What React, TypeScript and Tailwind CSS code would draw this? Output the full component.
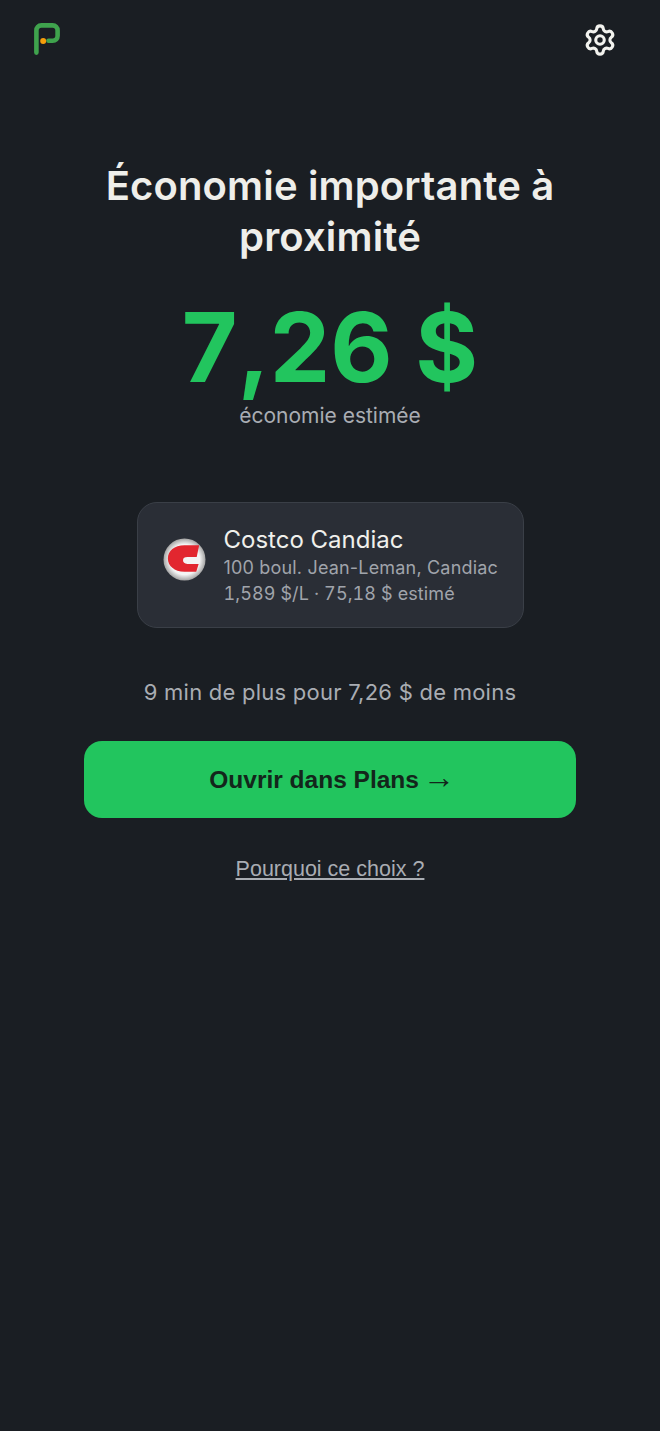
import { Settings } from 'lucide-react'

function Logo() {
  return (
    <svg width="26" height="32" viewBox="0 0 26 32" fill="none">
      <path d="M2.4 29.6V7.4C2.4 4.4 4.4 2.4 7.4 2.4H18.6C21.6 2.4 23.6 4.4 23.6 7.4V12.8C23.6 15.8 21.6 17.8 18.6 17.8H14.5" stroke="#3fa34d" strokeWidth="4.6" strokeLinecap="round" strokeLinejoin="round" />
      <circle cx="9.2" cy="18" r="3" fill="#f59e0b" />
    </svg>
  )
}

function StoreLogo() {
  return (
    <svg className="mb-[14px]" width="43" height="43" viewBox="0 0 44 44">
      <defs>
        <radialGradient id="disc">
          <stop offset="0.72" stopColor="#f4f4f4" />
          <stop offset="1" stopColor="#a3a3a3" />
        </radialGradient>
      </defs>
      <circle cx="22" cy="22" r="21.5" fill="url(#disc)" />
      <path d="M37 7.5H22C11.5 7.5 5 13.5 5 21C5 28.5 11.5 34.5 22 34.5H34L36.5 26.5H25C22 26.5 20.5 25 20.5 22.8C20.5 20.6 22 19.5 25 19.5H34.5Z" fill="#e2262f" />
    </svg>
  )
}

export default function App() {
  return (
    <div className="min-h-[1431px] bg-[#1a1e23] font-['Inter',sans-serif]">
      <header className="flex items-start justify-between pl-[34px] pr-[43px] pt-[23px]">
        <Logo />
        <Settings className="text-[#f2f2ee]" size={34} strokeWidth={2.2} />
      </header>

      <main className="flex flex-col items-center">
        <h1 className="mt-[103px] w-[480px] text-center text-[40px] font-[560] leading-[51px] tracking-[0.15px] text-[#eeeeea]">
          Économie importante à proximité
        </h1>
        <div className="mt-[37px] text-[96px] font-bold leading-[96px] [font-kerning:none] text-[#22c55e]">
          7,26 $
        </div>
        <p className="mt-[9px] text-[21px] leading-[24px] text-[#a9adb3]">économie estimée</p>

        <div className="mt-[74px] flex h-[126px] w-[387px] items-center gap-[18px] rounded-[20px] border border-[#3a3f47] bg-[#2a2e36] pl-[25px] pt-[2px]">
          <StoreLogo />
          <div>
            <div className="text-[24px] leading-[30px] text-[#f0f0ec]">Costco Candiac</div>
            <div className="text-[18px] leading-[26px] tracking-[0.18px] text-[#a0a4ab]">100 boul. Jean-Leman, Candiac</div>
            <div className="text-[18px] leading-[26px] tracking-[0.1px] text-[#a0a4ab] tabular-nums">1,589 $/L · 75,18 $ estimé</div>
          </div>
        </div>

        <p className="mt-[49px] text-[22px] leading-[30px] tracking-[0.24px] text-[#a9adb3]">9 min de plus pour 7,26 $ de moins</p>

        <button type="button" className="mt-[34px] h-[77px] w-[492px] rounded-[18px] bg-[#22c55e] font-['Liberation_Sans',sans-serif] text-[24.5px] font-bold text-[#13261b]">
          Ouvrir dans Plans <span className="ml-[-3px] mr-[-4px] font-['Liberation_Serif',serif] text-[32px] font-normal leading-none">→</span>
        </button>

        <a className="mt-[37px] font-['Liberation_Sans',sans-serif] text-[21.5px] leading-[28px] text-[#a9adb3] underline">
          Pourquoi ce choix ?
        </a>
      </main>
    </div>
  )
}
